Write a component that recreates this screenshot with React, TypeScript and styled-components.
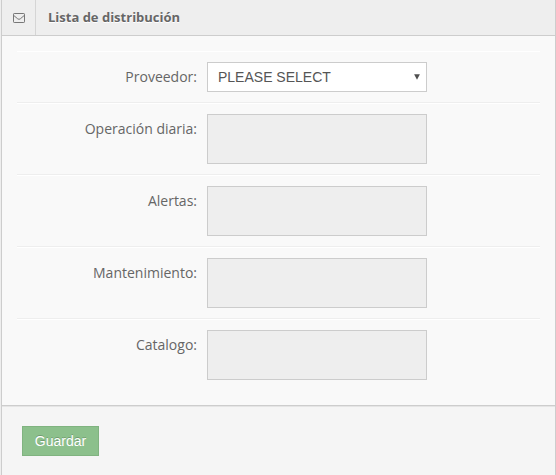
import React from "react";
import styled, { createGlobalStyle } from "styled-components";

const GlobalStyle = createGlobalStyle`
  * { box-sizing: border-box; }
  body {
    margin: 0;
    background: #eeeeee;
    color: #666666;
    font: 14px/20px "Open Sans", sans-serif;
    overflow: hidden;
  }
`;

const Widget = styled.section`
  height: 475px;
  margin-left: 1px;
  display: flex;
  flex-direction: column;
  border: solid #cdcdcd;
  border-width: 0 1px;
  background: #f9f9f9;
`;

const TitleBar = styled.header`
  display: flex;
  height: 36px;
  flex: none;
  background: #eeeeee;
  border-bottom: 1px solid #cdcdcd;
`;

const TitleIcon = styled.span`
  width: 34px;
  padding: 13px 0 0 11px;
  border-right: 1px solid #d5d5d5;
  line-height: 0;
`;

const Title = styled.h5`
  margin: 0;
  padding: 7px 12px;
  font-size: 13px;
  line-height: 20px;
  font-weight: 700;
  text-shadow: 0 1px 0 #ffffff;
`;

const Form = styled.form`
  flex: 1;
  display: flex;
  flex-direction: column;
`;

const Fields = styled.div`
  height: 369px;
  padding: 15px 15px 0;
`;

const Row = styled.div`
  display: flex;
  gap: 10px;
  padding: 10px 0;
  border-top: 1px solid #ffffff;
  border-bottom: 1px solid #eeeeee;

  &:last-child {
    border-bottom: 0;
  }
`;

const Label = styled.label`
  width: 180px;
  padding-top: 5px;
  text-align: right;
`;

const SelectBox = styled.button`
  display: flex;
  align-items: center;
  justify-content: space-between;
  width: 220px;
  height: 30px;
  padding: 0 6px 0 10px;
  border: 1px solid #cccccc;
  background: #ffffff;
  color: #555555;
  font: 14px/20px "Liberation Sans", Arial, sans-serif;
`;

const TextBox = styled.textarea`
  display: block;
  width: 220px;
  height: 50px;
  border: 1px solid #cccccc;
  border-radius: 0;
  background: #eeeeee;
  resize: none;
`;

const Actions = styled.footer`
  flex: 1;
  padding: 19px 20px;
  background: #f5f5f5;
  border-top: 1px solid #cdcdcd;
  box-shadow: inset 0 1px 0 #e5e5e5;
`;

const SaveButton = styled.button`
  display: block;
  width: 77px;
  height: 30px;
  margin-top: 1px;
  padding: 0;
  border: 1px solid #80b380;
  background: #8cc08c;
  color: #ffffff;
  font: 14px/20px "Liberation Sans", Arial, sans-serif;
  text-shadow: 0 -1px 0 rgba(0, 0, 0, 0.2);
`;

const textFields = [
  { id: "operacion", label: "Operación diaria:" },
  { id: "alertas", label: "Alertas:" },
  { id: "mantenimiento", label: "Mantenimiento:" },
  { id: "catalogo", label: "Catalogo:" },
];

const Envelope = () => (
  <svg width="12" height="10" viewBox="0 0 12 10" fill="none" stroke="#777777">
    <rect x="0.5" y="0.5" width="11" height="9" rx="0.7" />
    <path d="M0.8 2.5L4.7 5.8Q6 6.9 7.3 5.8L11.2 2.5" />
  </svg>
);

const Caret = () => (
  <svg width="6" height="6" viewBox="0 0 6 6">
    <path d="M0.1 0.2H5.9L3 5.8Z" fill="#505050" />
  </svg>
);

export default function App() {
  return (
    <>
      <GlobalStyle />
      <Widget>
        <TitleBar>
          <TitleIcon>
            <Envelope />
          </TitleIcon>
          <Title>Lista de distribución</Title>
        </TitleBar>
        <Form onSubmit={(event) => event.preventDefault()}>
          <Fields>
            <Row>
              <Label htmlFor="proveedor">Proveedor:</Label>
              <SelectBox id="proveedor" type="button">
                PLEASE SELECT
                <Caret />
              </SelectBox>
            </Row>
            {textFields.map((field) => (
              <Row key={field.id}>
                <Label htmlFor={field.id}>{field.label}</Label>
                <TextBox id={field.id} disabled />
              </Row>
            ))}
          </Fields>
          <Actions>
            <SaveButton type="submit">Guardar</SaveButton>
          </Actions>
        </Form>
      </Widget>
    </>
  );
}
